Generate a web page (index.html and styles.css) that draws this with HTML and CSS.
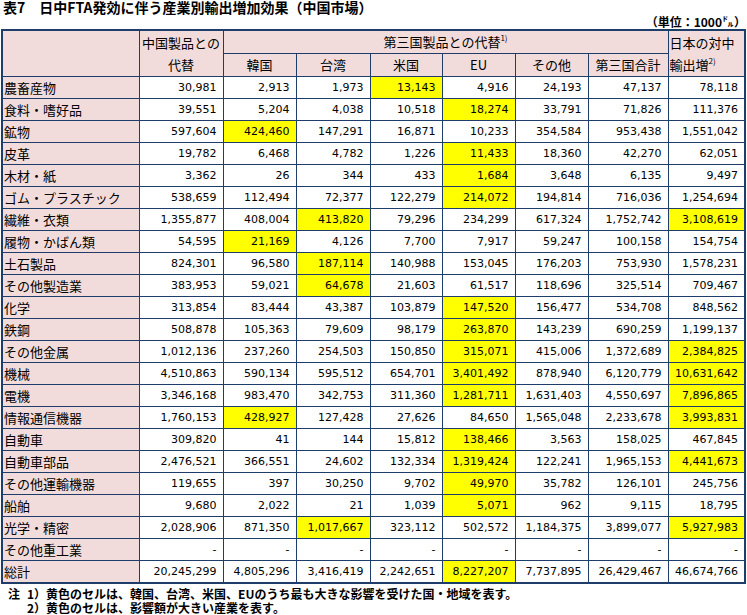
FILE: index.html
```html
<!DOCTYPE html>
<html lang="ja">
<head>
<meta charset="utf-8">
<link rel="stylesheet" href="styles.css">
</head>
<body>
<h1 class="title">表7　日中FTA発効に伴う産業別輸出増加効果（中国市場）</h1>
<div class="unit">（単位：1000㌦）</div>
<table class="tbl">
  <colgroup>
    <col class="c1"><col class="c2"><col class="c3"><col class="c4"><col class="c5"><col class="c6"><col class="c7"><col class="c8"><col class="c9">
  </colgroup>
  <thead>
    <tr>
      <th rowspan="2"></th>
      <th rowspan="2" class="hc">中国製品との<br>代替</th>
      <th colspan="6" class="hc">第三国製品との代替<sup>1)</sup></th>
      <th rowspan="2" class="hl">日本の対中<br>輸出増<sup>2)</sup></th>
    </tr>
    <tr>
      <th class="hc">韓国</th><th class="hc">台湾</th><th class="hc">米国</th><th class="hc">EU</th><th class="hc">その他</th><th class="hc">第三国合計</th>
    </tr>
  </thead>
  <tbody>
    <tr><th>農畜産物</th><td>30,981</td><td>2,913</td><td>1,973</td><td class="y">13,143</td><td>4,916</td><td>24,193</td><td>47,137</td><td>78,118</td></tr>
    <tr><th>食料・嗜好品</th><td>39,551</td><td>5,204</td><td>4,038</td><td>10,518</td><td class="y">18,274</td><td>33,791</td><td>71,826</td><td>111,376</td></tr>
    <tr><th>鉱物</th><td>597,604</td><td class="y">424,460</td><td>147,291</td><td>16,871</td><td>10,233</td><td>354,584</td><td>953,438</td><td>1,551,042</td></tr>
    <tr><th>皮革</th><td>19,782</td><td>6,468</td><td>4,782</td><td>1,226</td><td class="y">11,433</td><td>18,360</td><td>42,270</td><td>62,051</td></tr>
    <tr><th>木材・紙</th><td>3,362</td><td>26</td><td>344</td><td>433</td><td class="y">1,684</td><td>3,648</td><td>6,135</td><td>9,497</td></tr>
    <tr><th>ゴム・プラスチック</th><td>538,659</td><td>112,494</td><td>72,377</td><td>122,279</td><td class="y">214,072</td><td>194,814</td><td>716,036</td><td>1,254,694</td></tr>
    <tr><th>繊維・衣類</th><td>1,355,877</td><td>408,004</td><td class="y">413,820</td><td>79,296</td><td>234,299</td><td>617,324</td><td>1,752,742</td><td class="y">3,108,619</td></tr>
    <tr><th>履物・かばん類</th><td>54,595</td><td class="y">21,169</td><td>4,126</td><td>7,700</td><td>7,917</td><td>59,247</td><td>100,158</td><td>154,754</td></tr>
    <tr><th>土石製品</th><td>824,301</td><td>96,580</td><td class="y">187,114</td><td>140,988</td><td>153,045</td><td>176,203</td><td>753,930</td><td>1,578,231</td></tr>
    <tr><th>その他製造業</th><td>383,953</td><td>59,021</td><td class="y">64,678</td><td>21,603</td><td>61,517</td><td>118,696</td><td>325,514</td><td>709,467</td></tr>
    <tr><th>化学</th><td>313,854</td><td>83,444</td><td>43,387</td><td>103,879</td><td class="y">147,520</td><td>156,477</td><td>534,708</td><td>848,562</td></tr>
    <tr><th>鉄鋼</th><td>508,878</td><td>105,363</td><td>79,609</td><td>98,179</td><td class="y">263,870</td><td>143,239</td><td>690,259</td><td>1,199,137</td></tr>
    <tr><th>その他金属</th><td>1,012,136</td><td>237,260</td><td>254,503</td><td>150,850</td><td class="y">315,071</td><td>415,006</td><td>1,372,689</td><td class="y">2,384,825</td></tr>
    <tr><th>機械</th><td>4,510,863</td><td>590,134</td><td>595,512</td><td>654,701</td><td class="y">3,401,492</td><td>878,940</td><td>6,120,779</td><td class="y">10,631,642</td></tr>
    <tr><th>電機</th><td>3,346,168</td><td>983,470</td><td>342,753</td><td>311,360</td><td class="y">1,281,711</td><td>1,631,403</td><td>4,550,697</td><td class="y">7,896,865</td></tr>
    <tr><th>情報通信機器</th><td>1,760,153</td><td class="y">428,927</td><td>127,428</td><td>27,626</td><td>84,650</td><td>1,565,048</td><td>2,233,678</td><td class="y">3,993,831</td></tr>
    <tr><th>自動車</th><td>309,820</td><td>41</td><td>144</td><td>15,812</td><td class="y">138,466</td><td>3,563</td><td>158,025</td><td>467,845</td></tr>
    <tr><th>自動車部品</th><td>2,476,521</td><td>366,551</td><td>24,602</td><td>132,334</td><td class="y">1,319,424</td><td>122,241</td><td>1,965,153</td><td class="y">4,441,673</td></tr>
    <tr><th>その他運輸機器</th><td>119,655</td><td>397</td><td>30,250</td><td>9,702</td><td class="y">49,970</td><td>35,782</td><td>126,101</td><td>245,756</td></tr>
    <tr><th>船舶</th><td>9,680</td><td>2,022</td><td>21</td><td>1,039</td><td class="y">5,071</td><td>962</td><td>9,115</td><td>18,795</td></tr>
    <tr><th>光学・精密</th><td>2,028,906</td><td>871,350</td><td class="y">1,017,667</td><td>323,112</td><td>502,572</td><td>1,184,375</td><td>3,899,077</td><td class="y">5,927,983</td></tr>
    <tr><th>その他重工業</th><td>-</td><td>-</td><td>-</td><td>-</td><td>-</td><td>-</td><td>-</td><td>-</td></tr>
    <tr><th>総計</th><td>20,245,299</td><td>4,805,296</td><td>3,416,419</td><td>2,242,651</td><td class="y">8,227,207</td><td>7,737,895</td><td>26,429,467</td><td>46,674,766</td></tr>
  </tbody>
</table>
<div class="notes">
  <div class="note"><span class="nlabel">注</span><span>1）黄色のセルは、韓国、台湾、米国、EUのうち最も大きな影響を受けた国・地域を表す。</span></div>
  <div class="note"><span class="nlabel"></span><span>2）黄色のセルは、影響額が大きい産業を表す。</span></div>
</div>
</body>
</html>
```

FILE: styles.css
```css
html, body {
  margin: 0;
  padding: 0;
  background: #ffffff;
}
body {
  padding: 0 1px;
  font-family: "Noto Sans CJK JP", sans-serif;
  color: #000;
}
.title {
  margin: 0;
  padding-left: 2px;
  font-size: 14px;
  line-height: 15px;
  font-weight: bold;
  height: 15px;
}
.unit {
  text-align: right;
  font-size: 12px;
  font-weight: bold;
  line-height: 14px;
  height: 14px;
}
.tbl {
  border-collapse: collapse;
  table-layout: fixed;
  width: 745px;
  border: 2px solid #1f3d6b;
}
.c1 { width: 137px; }
.c2 { width: 84px; }
.c3 { width: 73px; }
.c4 { width: 74px; }
.c5 { width: 72px; }
.c6 { width: 73px; }
.c7 { width: 73px; }
.c8 { width: 80px; }
.c9 { width: 77px; }
.tbl th, .tbl td {
  border: 1px solid #1f3d6b;
  height: 21px;
  padding: 0;
  white-space: nowrap;
  overflow: hidden;
}
.tbl thead th {
  background: #f2dcdb;
  font-weight: normal;
  font-size: 13px;
  line-height: 22px;
  vertical-align: middle;
}
.tbl .hc { text-align: center; }
.tbl .hl { text-align: left; padding-left: 1px; }
.tbl tbody th {
  background: #f2dcdb;
  font-weight: normal;
  font-size: 13px;
  text-align: left;
  padding-left: 1px;
  line-height: 21px;
}
.tbl td {
  font-family: "DejaVu Sans", sans-serif;
  font-size: 11px;
  text-align: right;
  padding-right: 6px;
  line-height: 21px;
}
.tbl td.y { background: #ffff00; }
sup {
  font-size: 8px;
  line-height: 0;
  vertical-align: 6px;
}
.notes {
  margin-top: 3px;
  font-size: 12px;
  font-weight: bold;
  line-height: 14px;
}
.note {
  display: flex;
}
.nlabel {
  width: 26px;
  padding-left: 7px;
  box-sizing: border-box;
  flex: none;
}
```
